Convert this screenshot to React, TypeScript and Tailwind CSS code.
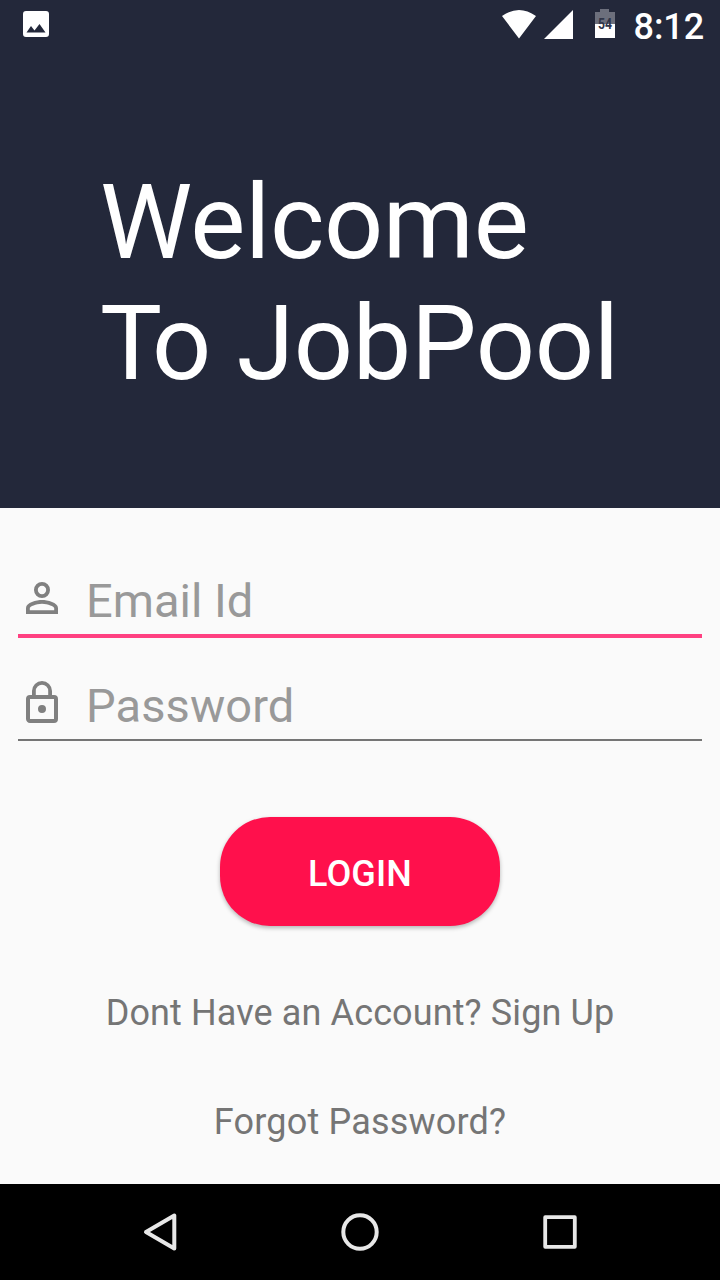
export default function App() {
  return (
    <main className="flex h-[1280px] w-[720px] flex-col overflow-hidden bg-[#fafafa] font-[Roboto,sans-serif]">
      <header className="h-[508px] bg-[#23283a] text-white">
        <div className="flex h-12 items-center justify-end pl-[22px] pr-4">
          <svg className="mr-auto size-[28px]" viewBox="0 0 28 28"><path fill="white" fillRule="evenodd" d="M4 1h20q3 0 3 3v20q0 3-3 3H4q-3 0-3-3V4q0-3 3-3Zm.5 21.5h19L17.5 14l-5 6.5L9 16Z" /></svg>
          <svg className="h-12 w-[120px]" viewBox="0 0 120 48">
            <path fill="white" d="M5 16q17-12 34 0L22 38.5Z M76 10v29H47Z" />
            <path fill="#6c6f7c" d="M103 9h9v3h6v13H98V12h5Z" /><path fill="white" d="M98 24h20v14H98Z" />
            <text x="101" y="29" fontSize="14" fontWeight="700" textLength="14" lengthAdjust="spacingAndGlyphs" fill="#303548">54</text>
          </svg>
          <span className="ml-[17px] pt-[6px] text-[36px] font-medium leading-none tracking-[-.1px]">8:12</span>
        </div>
        <h1 className="pl-[100px] pt-[114px] text-[104px] leading-[121px]"><span className="tracking-[-2px]">W</span><span className="tracking-[-.4px]">elcome</span><br /><span className="tracking-[-10px]">T</span><span className="tracking-[-.25px]">o JobPool</span></h1>
      </header>
      <section className="flex h-[676px] flex-col px-[18px] pt-[60px]">
        <div className="flex h-[70px] items-center border-b-4 border-[#ff4081] text-[47px] text-[#999]">
          <svg className="mb-[6px] mr-5 size-12" viewBox="0 0 24 24" fill="#808080"><path d="M12 5.9a2.1 2.1 0 1 1 0 4.2 2.1 2.1 0 0 1 0-4.2m0 9c3 0 6.1 1.5 6.1 2.1v1.1H5.9V17c0-.6 3.1-2.1 6.1-2.1M12 4a4 4 0 1 0 0 8 4 4 0 0 0 0-8m0 9c-2.7 0-8 1.3-8 4v3h16v-3c0-2.7-5.3-4-8-4" /></svg>
          <span>Email Id</span>
        </div>
        <div className="mt-[33px] flex h-[70px] items-center border-b-2 border-[#757575] text-[47px] text-[#999]">
          <svg className="mb-[4px] mr-5 size-12" viewBox="0 0 24 24" fill="#808080"><path d="M12 17a2 2 0 1 0 0-4 2 2 0 0 0 0 4m6-9h-1V6A5 5 0 0 0 7 6v2H6a2 2 0 0 0-2 2v10c0 1.1.9 2 2 2h12a2 2 0 0 0 2-2V10a2 2 0 0 0-2-2M8.9 6a3.1 3.1 0 0 1 6.2 0v2H8.9ZM18 20H6V10h12Z" /></svg>
          <span className="pt-0.5 tracking-[.1px]">Password</span>
        </div>
        <button className="mt-[76px] h-[109px] w-[280px] shrink-0 self-center rounded-[50px] bg-[#ff104c] pt-1 text-[36px] font-medium tracking-[.1px] text-white shadow-[0_2px_4px_rgba(0,0,0,.28)]">LOGIN</button>
        <p className="mt-[66px] text-center text-[36px] leading-[42px] tracking-[.12px] text-[#757575]">Dont Have an Account? Sign Up</p>
        <p className="mt-[67px] text-center text-[36px] leading-[42px] tracking-[.18px] text-[#757575]">Forgot Password?</p>
      </section>
      <nav className="flex h-24 items-center justify-center gap-[152px] bg-black">
        <svg className="size-12" viewBox="0 0 48 48" fill="none" stroke="#e8e8e8" strokeWidth="4" strokeLinejoin="round"><path d="M38.3 7.5v33L10 24Z" /></svg>
        <svg className="size-12" viewBox="0 0 48 48" fill="none" stroke="#e8e8e8" strokeWidth="4"><circle cx="24" cy="24" r="16.7" /></svg>
        <svg className="size-12" viewBox="0 0 48 48" fill="none" stroke="#e8e8e8" strokeWidth="3.8" strokeLinejoin="round"><rect x="9.2" y="9.2" width="29.6" height="29.6" /></svg>
      </nav>
    </main>
  );
}
